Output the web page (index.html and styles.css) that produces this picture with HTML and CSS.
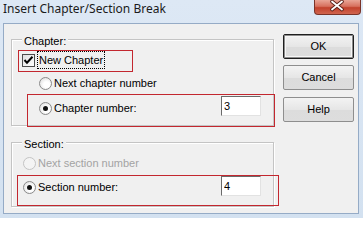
FILE: index.html
```html
<!DOCTYPE html>
<html>
<head>
<meta charset="utf-8">
<link rel="stylesheet" href="styles.css">
</head>
<body>
<div class="window">
  <div class="titlebar">
    <span class="title">Insert Chapter/Section Break</span>
    <div class="close">
      <svg width="47" height="15" viewBox="0 0 47 15">
        <path d="M19 1.5 L29 9.5 M29 1.5 L19 9.5" stroke="#5b2018" stroke-width="3.6" stroke-linecap="round" fill="none"/>
        <path d="M19 1.5 L29 9.5 M29 1.5 L19 9.5" stroke="#ffffff" stroke-width="1.8" stroke-linecap="round" fill="none"/>
      </svg>
    </div>
  </div>
  <div class="client">
    <div class="groups">
      <div class="group group-chapter">
        <div class="legend">Chapter:</div>
        <div class="row row-check">
          <span class="checkbox">
            <svg width="11" height="11" viewBox="0 0 11 11"><path d="M1.5 5 L4 7.8 L9.5 1.8" stroke="#000" stroke-width="2" fill="none"/></svg>
          </span>
          <span class="focus-label">New Chapter</span>
        </div>
        <div class="row row-radio indent">
          <span class="radio"></span>
          <span class="label">Next chapter number</span>
        </div>
        <div class="row row-input indent row-chapnum">
          <span class="radio checked"></span>
          <span class="label">Chapter number:</span>
          <input class="textbox" value="3">
        </div>
      </div>
      <div class="group group-section">
        <div class="legend">Section:</div>
        <div class="row row-radio flat row-nextsec">
          <span class="radio disabled"></span>
          <span class="label disabled-text">Next section number</span>
        </div>
        <div class="row row-input flat row-secnum">
          <span class="radio checked"></span>
          <span class="label">Section number:</span>
          <input class="textbox" value="4">
        </div>
      </div>
    </div>
    <div class="buttons">
      <div class="btn default">OK</div>
      <div class="btn btn-cancel">Cancel</div>
      <div class="btn btn-help">Help</div>
    </div>
  </div>
  <div class="mark mark1"></div>
  <div class="mark mark2"></div>
  <div class="mark mark3"></div>
</div>
</body>
</html>
```
FILE: styles.css
```css
html, body {
  margin: 0;
  padding: 0;
  background: #ffffff;
}
.window {
  position: relative;
  width: 363px;
  height: 218px;
  display: flex;
  flex-direction: column;
  background: linear-gradient(#dde8f5, #d3e1f0);
  overflow: hidden;
}
.titlebar {
  height: 23px;
  display: flex;
  align-items: flex-start;
  padding-left: 3px;
  box-sizing: border-box;
}
.title {
  font-family: "Noto Sans", sans-serif;
  font-size: 12px;
  line-height: 16px;
  padding-top: 1px;
  color: #1b1b1b;
}
.close {
  margin-left: auto;
  margin-right: 2px;
  width: 47px;
  height: 15px;
  box-sizing: border-box;
  border: 1px solid #7a3328;
  border-top: none;
  border-radius: 0 0 4px 4px;
  background: linear-gradient(#e9a596 0%, #d7705e 45%, #c2412c 55%, #d0654f 100%);
  display: flex;
  align-items: center;
  justify-content: center;
}
.close svg {
  display: block;
  margin-left: -2px;
}
.client {
  flex: 1;
  margin: 0 4px 4px 3px;
  background: #f0f0f0;
  border: 1px solid #95abc6;
  display: flex;
  font-family: "Liberation Sans", Arial, sans-serif;
  font-size: 11px;
  line-height: 13px;
  color: #000;
}
.groups {
  padding-left: 7px;
  display: flex;
  flex-direction: column;
}
.group {
  width: 263px;
  box-sizing: border-box;
  border: 1px solid #c4c4c4;
  box-shadow: inset 1px 1px 0 #ffffff, 1px 1px 0 #ffffff;
  display: flex;
  flex-direction: column;
}
.group-chapter {
  margin-top: 15px;
  height: 87px;
}
.group-section {
  margin-top: 16px;
  height: 65px;
}
.legend {
  margin-top: -5px;
  margin-left: 10px;
  padding: 0 2px;
  background: #f0f0f0;
  align-self: flex-start;
  height: 13px;
}
.row {
  display: flex;
  align-items: center;
}
.row-check {
  margin-top: 3px;
  margin-left: 10px;
}
.checkbox {
  width: 13px;
  height: 13px;
  box-sizing: border-box;
  border: 1px solid #4c4c4c;
  background: linear-gradient(135deg, #dedede, #ffffff);
  display: flex;
  align-items: center;
  justify-content: center;
  margin-right: 2px;
}
.checkbox svg {
  display: block;
}
.focus-label {
  border: 1px dotted #000;
  padding: 2px 1px 1px 1px;
  height: 13px;
}
.indent .radio {
  margin-left: 27px;
}
.flat .radio {
  margin-left: 11px;
}
.row-radio.indent {
  margin-top: 8px;
}
.row-chapnum {
  margin-top: 6px;
}
.row-nextsec {
  margin-top: 6px;
}
.row-secnum {
  margin-top: 6px;
}
.radio {
  width: 13px;
  height: 13px;
  box-sizing: border-box;
  border-radius: 50%;
  border: 1px solid #8a8a8a;
  background: radial-gradient(circle at 60% 60%, #ffffff 30%, #e2e2e2 80%);
  margin-right: 2px;
  display: flex;
  align-items: center;
  justify-content: center;
  flex: none;
}
.radio.checked::after {
  content: "";
  width: 5px;
  height: 5px;
  border-radius: 50%;
  background: #111;
}
.radio.disabled {
  border-color: #c4c4c4;
  background: #f4f4f4;
}
.label {
  white-space: nowrap;
}
.disabled-text {
  color: #a3a3a3;
}
.textbox {
  margin-left: auto;
  margin-right: 12px;
  width: 40px;
  height: 20px;
  box-sizing: border-box;
  border: 1px solid;
  border-color: #6a6a6a #e2e2e2 #e2e2e2 #6a6a6a;
  background: #fff;
  padding: 0 2px;
  font-family: "Liberation Sans", Arial, sans-serif;
  font-size: 11px;
  color: #000;
  outline: none;
}
.row-chapnum .textbox {
  margin-bottom: 4px;
}
.row-secnum .textbox {
  margin-bottom: 3px;
}
.buttons {
  margin-left: 9px;
  display: flex;
  flex-direction: column;
}
.btn {
  width: 71px;
  height: 25px;
  box-sizing: border-box;
  border: 1px solid #8e8e8e;
  border-radius: 2px;
  background: linear-gradient(#f3f3f3, #e6e6e6 50%, #dcdcdc 51%, #dddddd);
  display: flex;
  align-items: center;
  justify-content: center;
}
.btn.default {
  margin-top: 10px;
  border: 1px solid #1f1f1f;
  box-shadow: inset 0 0 0 1px #8c8c8c, inset 0 0 0 2px #f6f6f6;
}
.btn-cancel {
  margin-top: 6px;
}
.btn-help {
  margin-top: 7px;
}
.mark {
  position: absolute;
  border: 1px solid #c3272f;
  box-sizing: border-box;
  pointer-events: none;
}
.mark1 {
  left: 18px;
  top: 50px;
  width: 115px;
  height: 22px;
}
.mark2 {
  left: 27px;
  top: 94px;
  width: 248px;
  height: 33px;
}
.mark3 {
  left: 17px;
  top: 175px;
  width: 262px;
  height: 31px;
}
```
